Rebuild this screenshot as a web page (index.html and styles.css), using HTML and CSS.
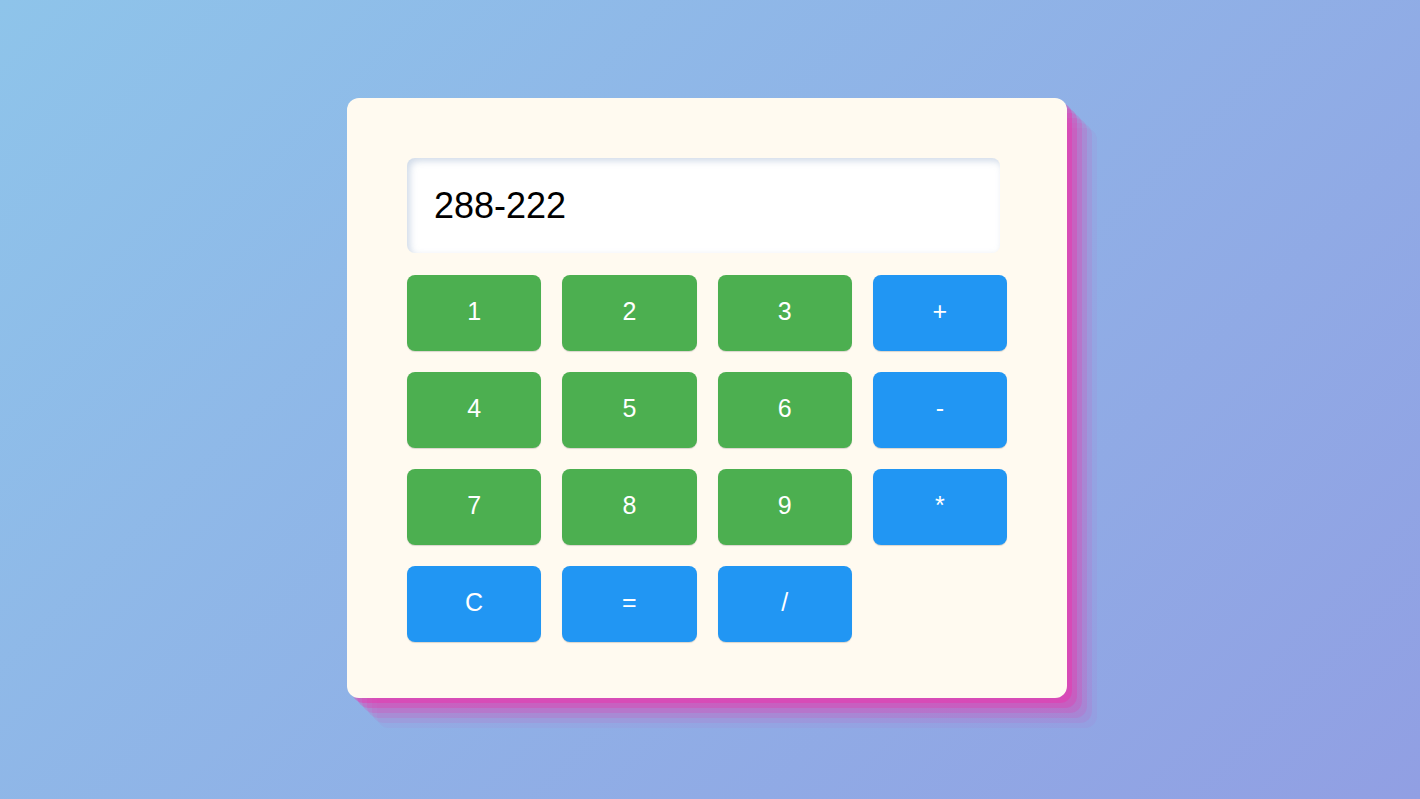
FILE: index.html
```html
<!DOCTYPE html>
<html lang="en">
<head>
<meta charset="utf-8">
<title>Calculator</title>
<link rel="stylesheet" href="styles.css">
</head>
<body>
<main class="stage">
  <div class="calculator">
    <input class="display" type="text" value="288-222" readonly>
    <div class="keys">
      <button class="key num">1</button>
      <button class="key num">2</button>
      <button class="key num">3</button>
      <button class="key op">+</button>
      <button class="key num">4</button>
      <button class="key num">5</button>
      <button class="key num">6</button>
      <button class="key op">-</button>
      <button class="key num">7</button>
      <button class="key num">8</button>
      <button class="key num">9</button>
      <button class="key op">*</button>
      <button class="key op">C</button>
      <button class="key op">=</button>
      <button class="key op">/</button>
    </div>
  </div>
</main>
</body>
</html>
```
FILE: styles.css
```css
* { box-sizing: border-box; }
html, body { height: 100%; }
body {
  margin: 0;
  font-family: "Liberation Sans", Arial, sans-serif;
  background: linear-gradient(135deg, #8ec4ea 0%, #919fe3 100%);
  overflow: hidden;
}
.stage {
  height: 100%;
  display: flex;
  align-items: center;
  justify-content: center;
  padding-right: 6px;
  padding-bottom: 3px;
}
.calculator {
  width: 720px;
  height: 600px;
  padding: 60px 60px 0 60px;
  background: #fffaf0;
  border-radius: 12px;
  box-shadow:
    rgba(240, 46, 170, 0.4) 5px 5px,
    rgba(240, 46, 170, 0.3) 10px 10px,
    rgba(240, 46, 170, 0.2) 15px 15px,
    rgba(240, 46, 170, 0.15) 20px 20px,
    rgba(240, 46, 170, 0.1) 25px 25px,
    rgba(240, 46, 170, 0.05) 30px 30px;
  display: flex;
  flex-direction: column;
  gap: 22px;
}
.display {
  width: 593px;
  height: 95px;
  border: none;
  outline: none;
  border-radius: 8px;
  background: #ffffff;
  padding: 0 0 0 27px;
  font-family: "Liberation Sans", Arial, sans-serif;
  font-size: 36px;
  color: #000;
  box-shadow: inset 3px 3px 7px rgba(120, 150, 190, 0.35);
}
.keys {
  width: 600px;
  display: grid;
  grid-template-columns: repeat(4, 1fr);
  grid-auto-rows: 76px;
  column-gap: 21px;
  row-gap: 21px;
}
.key {
  border: none;
  border-radius: 8px;
  color: #fff;
  font-family: "Liberation Sans", Arial, sans-serif;
  font-size: 25px;
  box-shadow: 0 1px 1px rgba(0, 0, 0, 0.15);
  padding: 0 0 3px 0;
  cursor: pointer;
}
.num { background: #4caf50; }
.op { background: #2196f3; }
```
